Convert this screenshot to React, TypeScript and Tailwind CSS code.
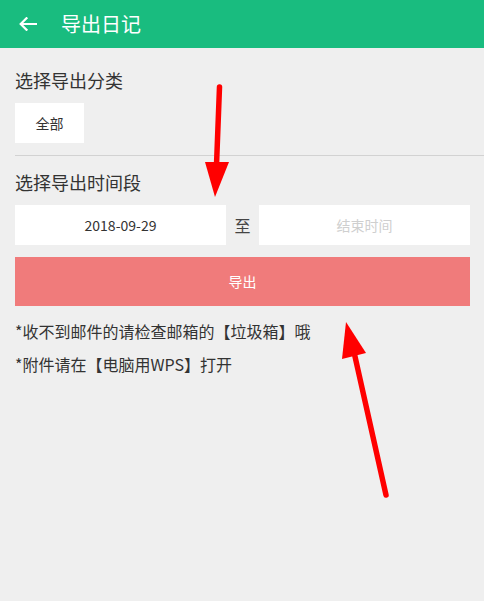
import React from "react";

const font = { fontFamily: '"Noto Sans CJK SC", "Noto Sans", sans-serif' };

export default function App() {
  return (
    <div className="relative w-[484px] h-[601px] bg-[#efefef] overflow-hidden" style={font}>
      <div className="h-12 bg-[#19bc7f] flex items-center">
        <svg width="18" height="14" viewBox="0 0 18 14" className="ml-[19px]">
          <path d="M17 7H2M7.5 1.2L1.7 7l5.8 5.8" stroke="#fff" strokeWidth="2.2" fill="none" strokeLinecap="square" />
        </svg>
        <span className="ml-[24px] text-white text-[20px] leading-none">导出日记</span>
      </div>

      <div className="pl-[15px] pt-[19px]">
        <div className="text-[18px] leading-[26px] text-[#333]">选择导出分类</div>
        <div className="mt-[10px] w-[69px] h-[40px] bg-white flex items-center justify-center text-[14px] text-[#333]">全部</div>
      </div>
      <div className="ml-[15px] mt-[12px] h-px bg-[#d2d2d2]" />

      <div className="px-[14px] pl-[15px] pt-[13px]">
        <div className="text-[18px] leading-[26px] text-[#333]">选择导出时间段</div>
        <div className="mt-[10px] flex items-center h-[40px]">
          <div className="w-[211px] h-full bg-white flex items-center justify-center text-[14px] text-[#333]">2018-09-29</div>
          <div className="flex-1 text-center text-[16px] text-[#444]">至</div>
          <div className="w-[211px] h-full bg-white flex items-center justify-center text-[14px] text-[#cfcfcf]">结束时间</div>
        </div>
        <div className="mt-[12px] h-[49px] bg-[#f07b7b] flex items-center justify-center text-white text-[14px]">导出</div>
        <div className="mt-[13px] text-[16px] leading-[24px] text-[#333]">*收不到邮件的请检查邮箱的【垃圾箱】哦</div>
        <div className="mt-[9px] text-[16px] leading-[24px] text-[#333]">*附件请在【电脑用WPS】打开</div>
      </div>

      <svg className="absolute left-0 top-0 pointer-events-none" width="484" height="601">
        <line x1="219.5" y1="87" x2="216.5" y2="165" stroke="#ff0000" strokeWidth="5.5" strokeLinecap="round" />
        <polygon points="205,162 229,162 215,197" fill="#ff0000" />
        <line x1="386" y1="495" x2="354" y2="352" stroke="#ff0000" strokeWidth="5.5" strokeLinecap="round" />
        <polygon points="346,322 342,359 366,353" fill="#ff0000" />
      </svg>
    </div>
  );
}
